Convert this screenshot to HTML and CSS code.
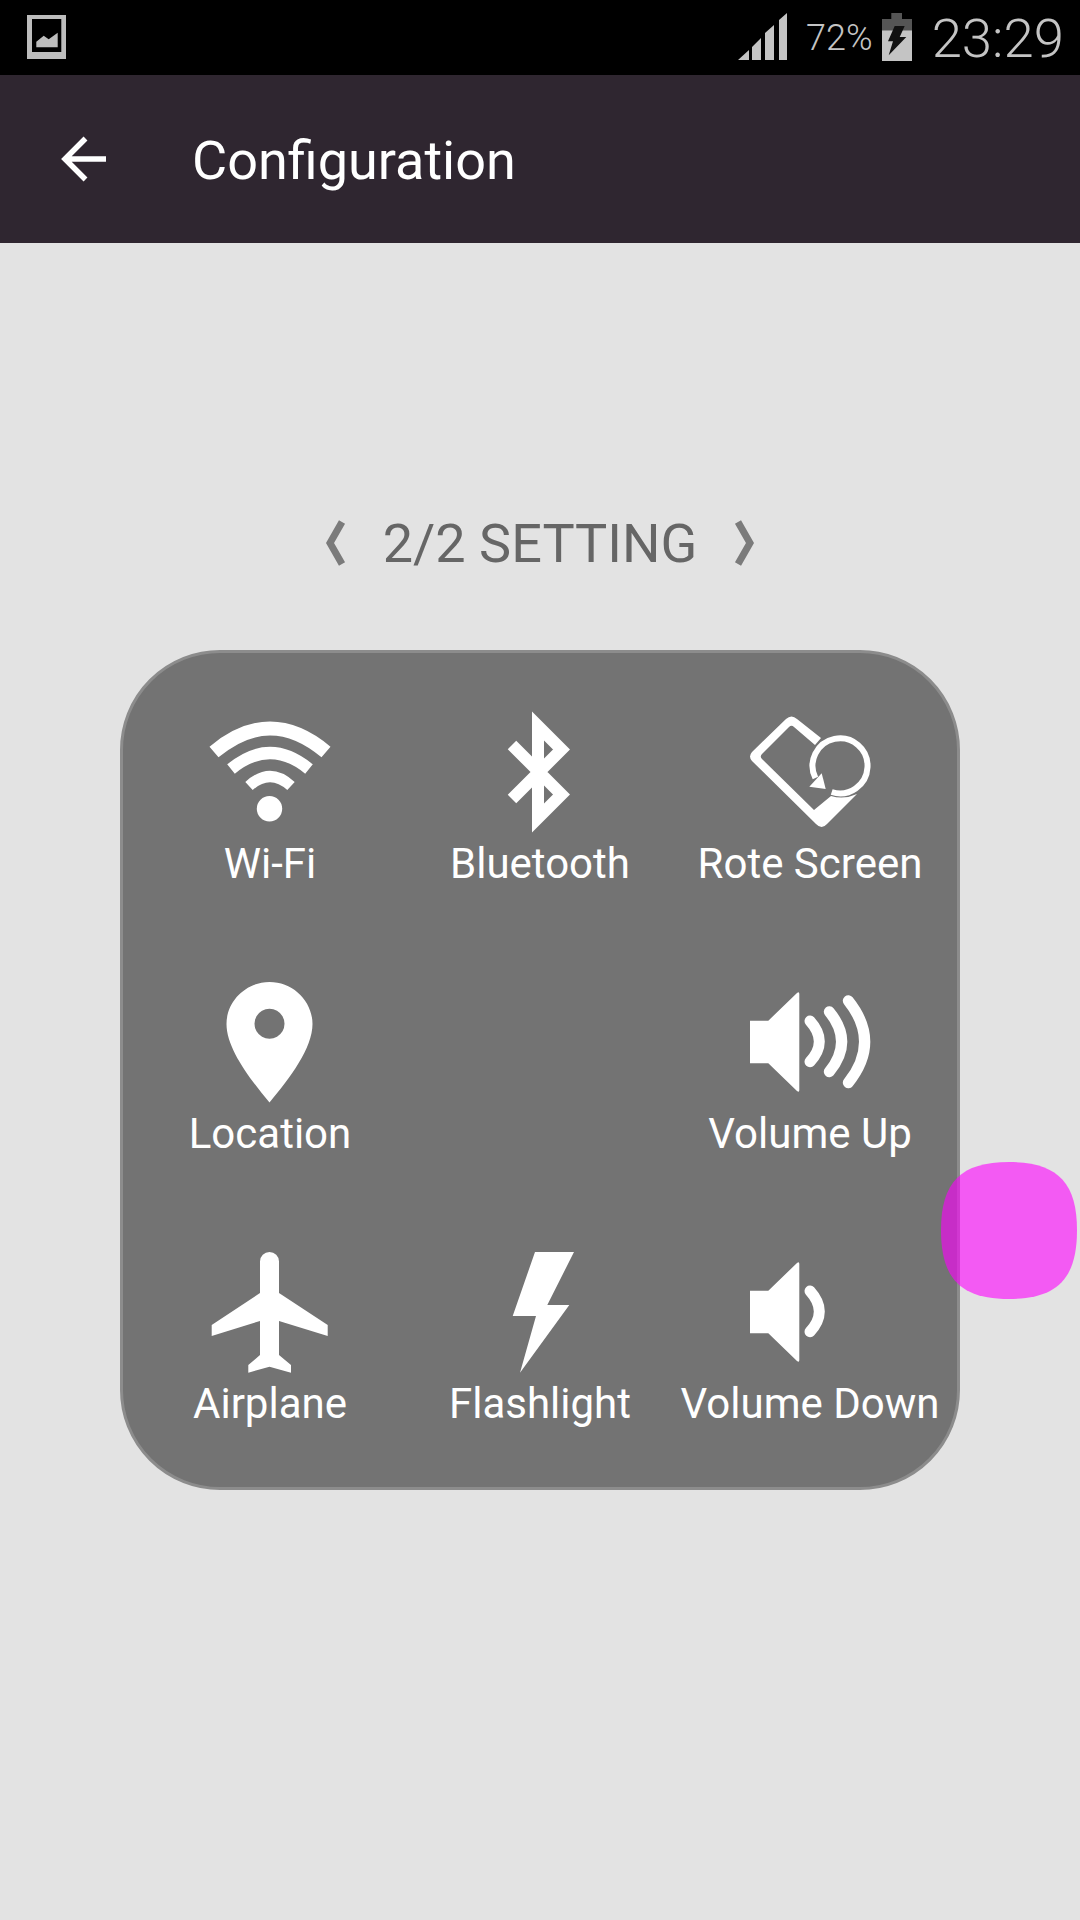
FILE: index.html
```html
<!DOCTYPE html>
<html lang="en">
<head>
  <meta charset="UTF-8">
  <meta name="viewport" content="width=device-width, initial-scale=1.0">
  <title>Configuration</title>
  <link rel="stylesheet" href="styles.css">
</head>
<body>
  <!-- status bar -->
  <div class="status-bar">
    <svg class="pic-icon" viewBox="0 0 39 44">
      <path fill-rule="evenodd" d="M0 0H39V44H0Z M5 4V37H34.300V4Z"/>
      <path d="M9.300 32.300V26.700L16.700 20.700L21.700 24.300L30.700 17.700V32.300Z"/>
    </svg>
    <div class="status-right">
      <svg class="signal" viewBox="0 0 50 48">
        <path d="M1 48L12 38V48Z M15 48V35L24 26V48Z M28 48V21L37 13V48Z M42 48V8L50 1V48Z"/>
      </svg>
      <span class="battery-text">72%</span>
      <svg class="battery" viewBox="0 0 30 48">
        <path class="battery-empty" d="M9.300 0H20V6H30V17.300H0V6H9.300Z"/>
        <path d="M0 17.300H30V48H0Z"/>
        <path class="battery-bolt" d="M12.700 13H22.700L17.700 24H24.300L6.700 42.300L11 28.300H6Z"/>
      </svg>
      <span class="clock">23:29</span>
    </div>
  </div>

  <!-- toolbar -->
  <header class="toolbar">
    <svg class="back" viewBox="0 0 46 46">
      <path d="M45 23H4 M24.500 2.500L4 23L24.500 43.500"/>
    </svg>
    <h1>Configuration</h1>
  </header>

  <main class="content">
    <div class="pager">
      <svg class="chevron" viewBox="0 0 20 46"><path d="M16 2L4 23L16 44"/></svg>
      <h2>2/2 SETTING</h2>
      <svg class="chevron" viewBox="0 0 20 46"><path d="M4 2L16 23L4 44"/></svg>
    </div>

    <section class="panel">
      <div class="cell">
        <svg class="icon" viewBox="0 0 120 120">
          <path class="line" stroke-width="14" d="M4 40Q60 -7 116 40"/>
          <path class="line" stroke-width="12" d="M21 57Q60 25 99 57"/>
          <path class="line" stroke-width="11" d="M39 74Q60 55 81 74"/>
          <circle cx="59.500" cy="96.700" r="12.700"/>
        </svg>
        <span>Wi-Fi</span>
      </div>
      <div class="cell">
        <svg class="icon" viewBox="0 0 120 120">
          <path class="line" stroke-width="12" d="M32 33L81.500 82.500L58 106V14L81.500 37.500L32 87"/>
        </svg>
        <span>Bluetooth</span>
      </div>
      <div class="cell">
        <svg class="icon" viewBox="0 0 120 120">
          <path d="M36 7Q41.500 2 47 7L71 26L65 33L44 15Q41.500 12.500 39 15L12 42Q9.500 44.700 12 47L64 98L81 84Q94 88 107 82L77 112Q71.700 118 66 112L2 49Q-2 44.700 2 40Z"/>
          <path class="line" stroke-width="6" d="M65.400 66A27.500 27.500 0 1 1 81.700 80"/>
          <path d="M59.300 74.700L75.700 77L71.700 61.300Z"/>
        </svg>
        <span>Rote Screen</span>
      </div>

      <div class="cell">
        <svg class="icon" viewBox="0 0 120 120">
          <path fill-rule="evenodd" d="M59.500 0C83 0 102.500 19 102.500 42C102.500 66 80 96 59.500 120.500C39 96 16.500 66 16.500 42C16.500 19 36 0 59.500 0Z M59.500 26.700A15 15 0 1 0 59.510 26.700Z"/>
        </svg>
        <span>Location</span>
      </div>
      <div class="cell"></div>
      <div class="cell">
        <svg class="icon" viewBox="0 0 120 120">
          <path d="M0 38.700H18.300L47 11Q49.300 9 49.300 12V108Q49.300 111 47 109L18.300 81.300H0Z"/>
          <path class="wave" d="M60 39Q78.600 59.500 60 79.700"/>
          <path class="wave" d="M79.300 29.700Q104 59.700 79.300 89.700"/>
          <path class="wave" d="M98.300 18.700Q131 59.700 98.300 100.700"/>
        </svg>
        <span>Volume Up</span>
      </div>

      <div class="cell">
        <svg class="icon" viewBox="0 0 120 120">
          <path d="M50 9.500A9.500 9.500 0 0 1 69 9.500V41L117.700 73V84L69 69V103L81 113V120.700L59.500 114.700L38.300 120.700V113L50 103V69L1.700 84V73L50 41Z"/>
        </svg>
        <span>Airplane</span>
      </div>
      <div class="cell">
        <svg class="icon" viewBox="0 0 120 120">
          <path d="M55 0H94L67.300 53H89.300L40 120.700L56 64H32.700Z"/>
        </svg>
        <span>Flashlight</span>
      </div>
      <div class="cell">
        <svg class="icon" viewBox="0 0 120 120">
          <path d="M0 38.700H18.300L47 11Q49.300 9 49.300 12V108Q49.300 111 47 109L18.300 81.300H0Z"/>
          <path class="wave" d="M60 39Q78.600 59.500 60 79.700"/>
        </svg>
        <span>Volume Down</span>
      </div>
    </section>
  </main>

  <!-- floating touch button -->
  <svg class="float-btn" viewBox="0 0 136 137">
    <path d="M68 0C116 0 136 20 136 68C136 117 116 137 68 137C20 137 0 117 0 68C0 20 20 0 68 0Z"/>
  </svg>
</body>
</html>
```

FILE: styles.css
```css
*{margin: 0px; padding: 0px; box-sizing: border-box;}
html, body{height: 100%;}
body{
  width: 1080px; height: 1920px;
  background: #e3e3e3;
  font-family: Roboto, "Liberation Sans", sans-serif;
  position: relative;
  overflow: hidden;
}

/* status bar */
.status-bar{
  height: 75px;
  background: #000;
  display: flex;
  justify-content: space-between;
  align-items: center;
  padding: 0 16px 0 27px;
  color: #c4c4c4;
}
.pic-icon{width: 39px; height: 44px; fill: #bdbdbd; margin-bottom: 1px;}
.status-right{display: flex; align-items: center;}
.signal{width: 50px; height: 48px; fill: #c4c4c4; margin-bottom: 3px;}
.battery-text{font-size: 36px; font-weight: 300; margin-left: 19px;}
.battery{width: 30px; height: 48px; fill: #c4c4c4; margin-left: 9px; margin-bottom: 1px;}
.battery-empty{fill: #555;}
.battery-bolt{fill: #111;}
.clock{font-size: 54.500px; font-weight: 300; margin-left: 20px;}

/* toolbar */
.toolbar{
  height: 168px;
  background: #2f2630;
  display: flex;
  align-items: center;
  padding-left: 61px;
  color: #fff;
}
.back{width: 46px; height: 46px; fill: none; stroke: #fff; stroke-width: 5.500; margin-right: 85px;}
.toolbar h1{font-size: 54px; font-weight: 400; margin-top: 3px;}

/* content */
.content{
  display: flex;
  flex-direction: column;
  align-items: center;
  padding-top: 265px;
}
.pager{
  height: 70px;
  display: flex;
  align-items: center;
  gap: 37px;
  color: #666;
}
.pager h2{font-size: 54px; font-weight: 400; margin-top: 1px;}
.chevron{width: 20px; height: 46px; fill: none; stroke: #7b7b7b; stroke-width: 7;}

.panel{
  width: 840px; height: 840px;
  margin-top: 72px;
  padding: 12px;
  background: #737373;
  border: 3px solid #8c8c8c;
  border-radius: 100px;
  display: grid;
  grid-template-columns: repeat(3, 270px);
  grid-template-rows: repeat(3, 270px);
}
.cell{
  display: flex;
  flex-direction: column;
  align-items: center;
  padding-top: 47px;
  color: #fff;
  font-size: 42px;
  white-space: nowrap;
}
.cell span{line-height: 48px; margin-top: 8px;}
.icon{width: 120px; height: 120px; fill: #fff; overflow: visible;}
.icon .line{fill: none; stroke: #fff;}
.icon .wave{fill: none; stroke: #fff; stroke-width: 11; stroke-linecap: round;}

/* floating button */
.float-btn{
  width: 136px; height: 137px;
  fill: #ff00ff;
  opacity: 0.6;
  position: absolute; left: 941px; top: 1162px;
}
```
